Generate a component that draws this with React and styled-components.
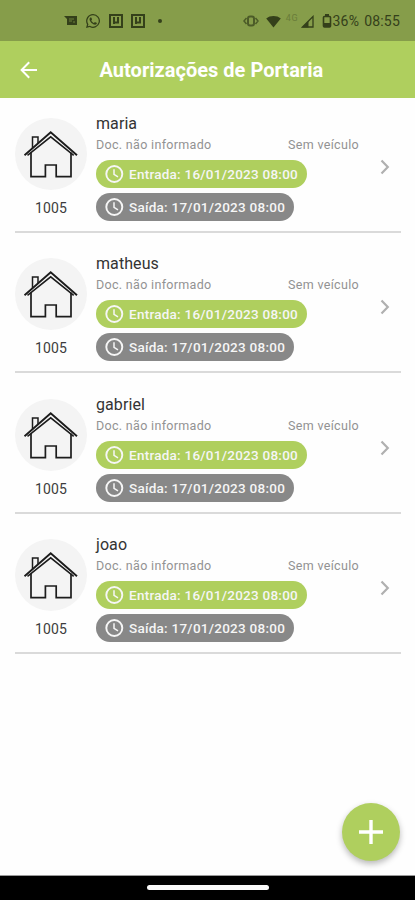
import React from "react";
import styled, { createGlobalStyle } from "styled-components";

const GlobalStyle = createGlobalStyle`
  * {
    box-sizing: border-box;
  }

  body {
    background: #fefefe;
    font-family: Roboto, "Liberation Sans", sans-serif;
    margin: 0;
  }

  svg {
    display: block;
    flex-shrink: 0;
  }
`;

const settings = {
  colors: {
    primary: "#afcf5e",
    primaryDark: "#869d4a",
    status: "#34401a",
    exit: "#888888",
    line: "#dadada"
  }
};

const Screen = styled.div`
  background: #fefefe;
  display: flex;
  flex-direction: column;
  height: 900px;
  overflow: hidden;
  position: relative;
  width: 415px;
`;

const StatusBar = styled.div`
  align-items: center;
  background: ${settings.colors.primaryDark};
  color: ${settings.colors.status};
  display: flex;
  flex-shrink: 0;
  height: 41px;
  justify-content: space-between;
  padding: 1px 15px 0 64px;
`;

const Notifications = styled.div`
  align-items: center;
  display: flex;
  gap: 8px;
`;

const Dot = styled.span`
  background: currentColor;
  border-radius: 50%;
  height: 4px;
  margin-left: 5px;
  width: 4px;
`;

const Indicators = styled.div`
  align-items: center;
  display: flex;
  font-size: 14px;
  letter-spacing: 0.2px;
  line-height: 20px;
`;

const Network = styled.span`
  align-self: flex-start;
  font-size: 9px;
  letter-spacing: 0.8px;
  line-height: 15px;
  margin: 0 2px 0 5px;
  opacity: 0.35;
`;

const Clock = styled.span`
  margin-left: 5px;
`;

const Header = styled.header`
  align-items: center;
  background: ${settings.colors.primary};
  display: flex;
  flex-shrink: 0;
  height: 57px;
  padding: 0 20px;
`;

const Title = styled.h1`
  color: #fff;
  font-size: 20px;
  font-weight: 700;
  letter-spacing: 0.02px;
  line-height: 24px;
  margin: 1px 0 0 61.5px;
  white-space: nowrap;
`;

const List = styled.ul`
  flex: 1;
  list-style: none;
  margin: 0;
  padding: 0 14px 0 15px;
`;

const Item = styled.li`
  border-bottom: 2px solid ${settings.colors.line};
  display: flex;
  height: 140.3px;
  padding-top: 25.3px;

  &:first-child {
    height: 135px;
    padding-top: 20px;
  }
`;

const Unit = styled.div`
  align-items: center;
  color: #3c3c3c;
  display: flex;
  flex-direction: column;
  font-size: 14px;
  gap: 10px;
  letter-spacing: 0.15px;
  line-height: 17px;
  width: 72px;
`;

const Avatar = styled.div`
  background: #f4f4f4;
  border-radius: 50%;
  height: 72px;
  width: 72px;
`;

const Details = styled.div`
  margin: -4px 0 0 9px;
  width: 263px;
`;

const Name = styled.div`
  color: #333;
  font-size: 16px;
  letter-spacing: 0.08px;
  line-height: 19px;
`;

const Meta = styled.div`
  color: #929292;
  display: flex;
  font-size: 12.5px;
  justify-content: space-between;
  letter-spacing: 0.32px;
  line-height: 16px;
  margin-top: 4px;
`;

const Pill = styled.div`
  align-items: center;
  background: ${props =>
    props.$exit ? settings.colors.exit : settings.colors.primary};
  border-radius: 14px;
  color: #f6f6f6;
  display: flex;
  font-size: 13.5px;
  font-weight: 500;
  gap: 5px;
  height: 28px;
  letter-spacing: 0.25px;
  margin-top: ${props => (props.$exit ? 5 : 7)}px;
  padding: 0 8px;
  white-space: nowrap;
  width: ${props => (props.$exit ? 198 : 211)}px;
`;

const Chevron = styled.div`
  margin: 41px 0 0 21px;
`;

const AddButton = styled.button`
  align-items: center;
  background: ${settings.colors.primary};
  border: none;
  border-radius: 50%;
  bottom: 39px;
  box-shadow: 0 3px 6px rgba(0, 0, 0, 0.28);
  display: flex;
  height: 58px;
  justify-content: center;
  padding: 0;
  position: absolute;
  right: 15px;
  width: 58px;
`;

const NavigationBar = styled.div`
  background: #000;
  border-top: 1px solid #999;
  display: flex;
  flex-shrink: 0;
  height: 25px;
  justify-content: center;
  padding-top: 9px;
`;

const HomeHandle = styled.div`
  background: #fafafa;
  border-radius: 3px;
  height: 5px;
  width: 122px;
`;

const MessageIcon = () => (
  <svg width="13" height="12" viewBox="0 0 13 12">
    <path d="M0 1h13v9H3V4L0 1z" fill="currentColor" />
    <path d="M5 4h5M5 6h3M10 6v2" stroke="#869d4a" opacity="0.7" />
  </svg>
);

const WhatsAppIcon = () => (
  <svg width="16" height="16" viewBox="0 0 24 24" fill="currentColor">
    <path d="M12 1.5A10.4 10.4 0 0 0 3 17.100L1.500 22.500l5.600-1.450A10.400 10.400 0 1 0 12 1.500zm0 2a8.500 8.500 0 1 1-4.600 15.600l-3.100.8.850-3A8.500 8.500 0 0 1 12 3.500z" />
    <path d="M8.400 6.800c-.5 0-1.600.9-1.600 2.500 0 3.600 5 8.200 8.400 8.200 1.400 0 2.600-1 2.600-2.400 0-.5-2.500-1.700-2.900-1.700-.5 0-1 1.500-1.500 1.500-.8 0-3.900-2.700-3.900-3.700 0-.5 1-1 1-1.500 0-.6-.9-2.900-1.300-2.900z" />
  </svg>
);

const AppIcon = () => (
  <svg width="14" height="14" viewBox="0 0 14 14" fill="none">
    <rect x="1" y="1" width="12" height="12" stroke="currentColor" strokeWidth="2" />
    <path d="M5 3v7M9 3v5.500H6" stroke="currentColor" strokeWidth="2" />
  </svg>
);

const VibrateIcon = () => (
  <svg width="16" height="14" viewBox="0 0 16 14" fill="none" stroke="currentColor" opacity="0.7">
    <rect x="5" y="2.500" width="6" height="9" rx="2" strokeWidth="2" />
    <path d="M3.500 4 1 7l2.500 3M12.500 4 15 7l-2.500 3" strokeWidth="1.500" />
  </svg>
);

const Wifi = styled.svg`
  margin-left: 7px;
`;

const WifiIcon = () => (
  <Wifi width="15" height="13" viewBox="0 0 15 13">
    <path d="M.2 3.500C4 .2 11 .2 14.800 3.500L7.500 12.500z" fill="currentColor" />
  </Wifi>
);

const SignalIcon = () => (
  <svg width="13" height="13" viewBox="0 0 13 13">
    <path d="M1.500 12 12 1.500V12z" fill="none" stroke="currentColor" strokeWidth="1.300" />
    <path d="M1 12.500 7.500 6v6.500z" fill="currentColor" />
  </svg>
);

const Battery = styled.svg`
  margin: 0 1px 0 8px;
`;

const BatteryIcon = () => (
  <Battery width="10" height="14" viewBox="0 0 10 14">
    <path d="M3 0h4v2H3z" fill="currentColor" />
    <rect x="1.500" y="2.500" width="7" height="10.500" rx="1" fill="none" stroke="currentColor" strokeWidth="1.600" />
    <path d="M1 9h8v4H1z" fill="currentColor" />
  </Battery>
);

const BackIcon = () => (
  <svg width="18" height="18" viewBox="0 0 18 18" fill="none" stroke="#fff" strokeWidth="2">
    <path d="M17 9H2M9.200 1.300 1.600 9l7.600 7.700" />
  </svg>
);

const HouseIcon = () => (
  <svg width="72" height="72" viewBox="0 0 72 72" fill="none" stroke="#1c1c1c" strokeWidth="1.700">
    <path d="M9.500 37.300 35.700 14.200 62 37.300" strokeWidth="1.900" />
    <path d="M12.500 37.300 35.700 18.800l23 18.500" strokeWidth="1.500" />
    <path d="M16 34.500v24.200h14.400V47h10.800v11.700H56V34.500" />
    <path d="M17.500 30V19H23v6" strokeWidth="1.500" />
  </svg>
);

const ClockIcon = () => (
  <svg width="20" height="20" viewBox="0 0 20 20" fill="none" stroke="#f6f6f6" strokeWidth="1.900">
    <circle cx="10.300" cy="10" r="8" />
    <path d="M10 5.200v5.200l4 2.500" strokeWidth="1.500" />
  </svg>
);

const ChevronIcon = () => (
  <svg width="10" height="16" viewBox="0 0 10 16" fill="none" stroke="#b0b0b0" strokeWidth="2.200">
    <path d="m1.500 1.500 6.300 6.500-6.300 6.500" />
  </svg>
);

const PlusIcon = () => (
  <svg width="26" height="26" viewBox="0 0 26 26" stroke="#fff" strokeWidth="3.400">
    <path d="M13 1v24M1 13h24" />
  </svg>
);

const visitors = ["maria", "matheus", "gabriel", "joao"];

const Authorization = ({ name }) => (
  <Item>
    <Unit>
      <Avatar>
        <HouseIcon />
      </Avatar>
      1005
    </Unit>
    <Details>
      <Name>{name}</Name>
      <Meta>
        <span>Doc. não informado</span>
        <span>Sem veículo</span>
      </Meta>
      <Pill>
        <ClockIcon />
        Entrada: 16/01/2023 08:00
      </Pill>
      <Pill $exit>
        <ClockIcon />
        Saída: 17/01/2023 08:00
      </Pill>
    </Details>
    <Chevron>
      <ChevronIcon />
    </Chevron>
  </Item>
);

const App = () => (
  <>
    <GlobalStyle />
    <Screen>
      <StatusBar>
        <Notifications>
          <MessageIcon />
          <WhatsAppIcon />
          <AppIcon />
          <AppIcon />
          <Dot />
        </Notifications>
        <Indicators>
          <VibrateIcon />
          <WifiIcon />
          <Network>4G</Network>
          <SignalIcon />
          <BatteryIcon />
          36%
          <Clock>08:55</Clock>
        </Indicators>
      </StatusBar>
      <Header>
        <BackIcon />
        <Title>Autorizações de Portaria</Title>
      </Header>
      <List>
        {visitors.map(name => (
          <Authorization key={name} name={name} />
        ))}
      </List>
      <AddButton type="button" aria-label="Adicionar">
        <PlusIcon />
      </AddButton>
      <NavigationBar>
        <HomeHandle />
      </NavigationBar>
    </Screen>
  </>
);

export default App;
